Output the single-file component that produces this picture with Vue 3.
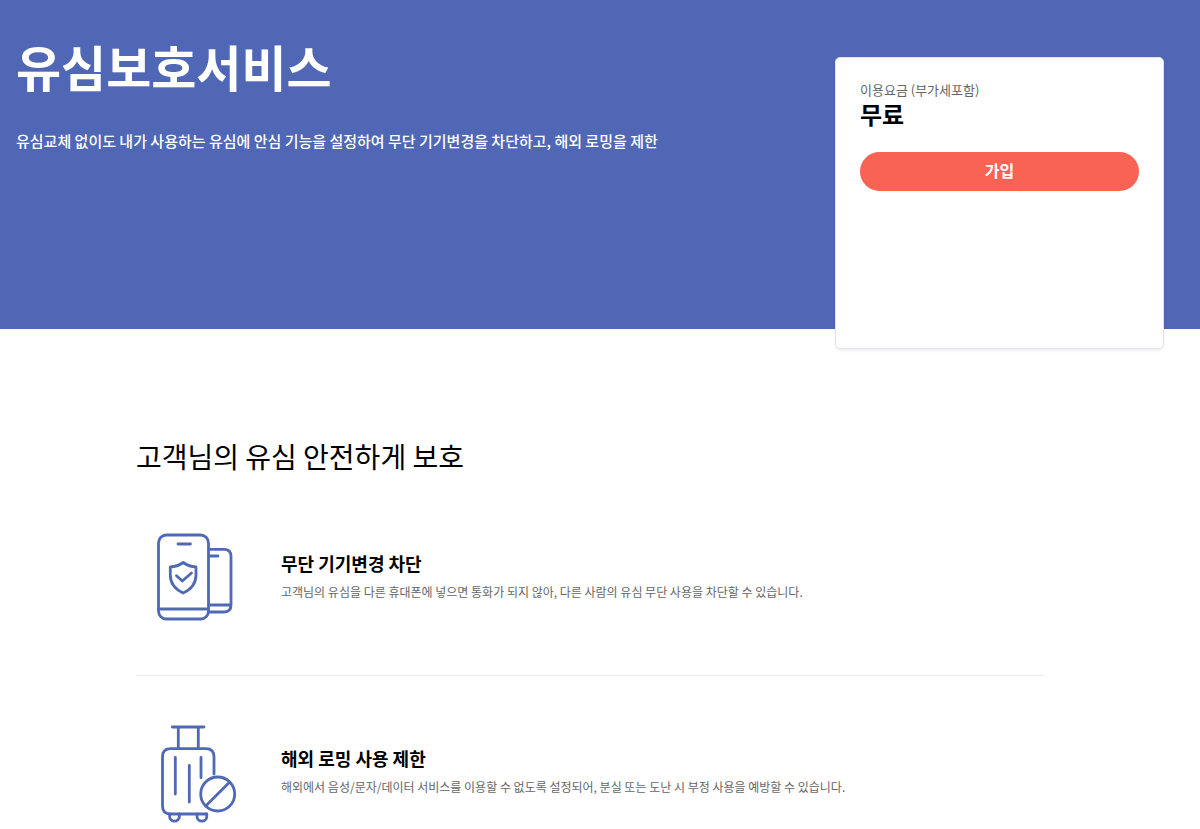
<script setup>
const price = { label: '이용요금 (부가세포함)', value: '무료' }
</script>

<template>
  <main class="page">
    <header class="hero">
      <div class="intro">
        <h1>유심보호서비스</h1>
        <p>유심교체 없이도 내가 사용하는 유심에 안심 기능을 설정하여 무단 기기변경을 차단하고, 해외 로밍을 제한</p>
      </div>
      <aside class="card">
        <p class="label">{{ price.label }}</p>
        <p class="value">{{ price.value }}</p>
        <button type="button">가입</button>
      </aside>
    </header>

    <section class="content">
      <h2>고객님의 유심 안전하게 보호</h2>
      <ul>
        <li>
          <svg class="icon" viewBox="0 0 110 114" aria-hidden="true">
            <rect x="18.5" y="15" width="50" height="84" rx="8" />
            <path d="M18.5 89H68.5M38 24H50.5M69 29.3H84Q91 29.3 91 36.3V85Q91 92 84 92H69M69 36H78M69 85H91" />
            <path d="M43.2 42.5Q49 46.7 56 47V55Q56 67 43.2 73Q30.3 67 30.3 55V47Q37.3 46.7 43.2 42.5Z" />
            <path d="M36.5 55.7L42.3 61L51.5 53" />
          </svg>
          <div class="text">
            <h3>무단 기기변경 차단</h3>
            <p>고객님의 유심을 다른 휴대폰에 넣으면 통화가 되지 않아, 다른 사람의 유심 무단 사용을 차단할 수 있습니다.</p>
          </div>
        </li>
        <li>
          <svg class="icon" viewBox="0 0 110 114" aria-hidden="true">
            <path d="M32.3 12H64M38.3 12V33M58.3 12V33" />
            <path d="M74 59V42Q74 33.7 66 33.7H30.5Q22.5 33.7 22.5 42V91Q22.5 99 30.5 99H66" />
            <path d="M35.3 42.3V79M49.3 50.3V87M61 42.3V62.7" />
            <path d="M29.6 99V101.3A4.9 4.9 0 0 0 39.4 101.3V99M57 99V101.3A4.9 4.9 0 0 0 66.8 101.3V99" />
            <circle cx="77.7" cy="79" r="17" />
            <path d="M65.7 91L89.7 67" />
          </svg>
          <div class="text">
            <h3>해외 로밍 사용 제한</h3>
            <p>해외에서 음성/문자/데이터 서비스를 이용할 수 없도록 설정되어, 분실 또는 도난 시 부정 사용을 예방할 수 있습니다.</p>
          </div>
        </li>
      </ul>
    </section>
  </main>
</template>

<style>
body {
  margin: 0;
  background: #fff;
}
</style>

<style scoped>
.page {
  font-family: "Noto Sans CJK KR", sans-serif;
  color: #000;
}
h1, h2, h3, p, ul {
  margin: 0;
  padding: 0;
}
.hero {
  display: flex;
  justify-content: space-between;
  align-items: flex-start;
  gap: 24px;
  padding: 32px 36px 0 16px;
  background: #4f67b5;
  color: #fff;
}
h1 {
  font-size: 49px;
  line-height: 68px;
  font-weight: 700;
}
.intro p {
  margin-top: 29px;
  font-size: 15px;
  line-height: 24px;
  font-weight: 500;
}
.card {
  box-sizing: border-box;
  flex: 0 0 329px;
  min-height: 292px;
  margin: 25px 0 -20px;
  padding: 22px 24px;
  border: 1px solid #e0e2e8;
  border-radius: 5px;
  background: #fff;
  box-shadow: 0 2px 3px rgba(0, 0, 0, 0.06);
}
.label {
  color: #666;
  font-size: 13px;
  line-height: 20px;
}
.value {
  color: #000;
  font-size: 24px;
  line-height: 28px;
  font-weight: 700;
}
button {
  display: block;
  width: 100%;
  height: 39px;
  margin-top: 24px;
  padding: 0 0 3px;
  border: 0;
  border-radius: 20px;
  background: #f96354;
  color: #fff;
  font-family: inherit;
  font-size: 16px;
  font-weight: 700;
  cursor: pointer;
}
.content {
  padding: 106px 156px 0 136px;
}
h2 {
  font-size: 28px;
  line-height: 42px;
  font-weight: 400;
}
ul {
  margin-top: 43px;
  list-style: none;
}
li {
  display: flex;
  align-items: center;
  gap: 31px;
  padding-left: 4px;
}
li + li {
  margin-top: 41px;
  padding-top: 39px;
  border-top: 1px solid #eee;
}
.icon {
  flex: none;
  width: 110px;
  height: 114px;
  fill: none;
  stroke: #5069b5;
  stroke-width: 2.8;
  stroke-linecap: round;
  stroke-linejoin: round;
}
h3 {
  font-size: 18px;
  line-height: 30px;
  font-weight: 700;
}
.text p {
  color: #666;
  font-size: 12px;
  line-height: 28px;
}
</style>
